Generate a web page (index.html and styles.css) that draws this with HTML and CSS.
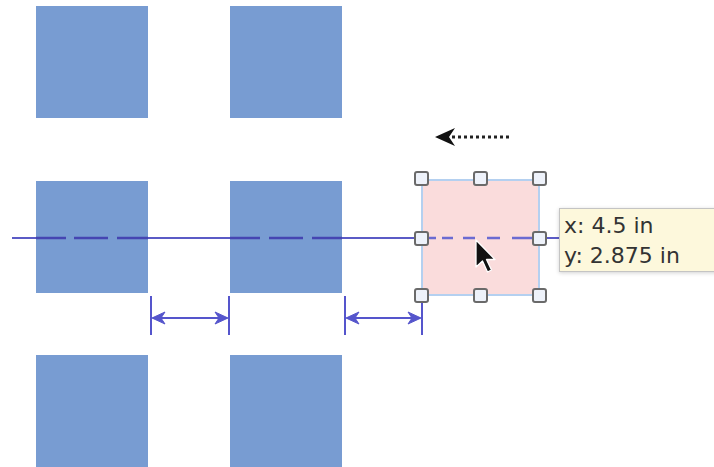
FILE: index.html
```html
<!DOCTYPE html>
<html lang="en">
<head>
    <meta charset="UTF-8">
    <title>Align shapes</title>
    <link rel="stylesheet" href="styles.css">
</head>
<body>
<div class="canvas">
    <div class="shape" style="left: 36px; top: 6px;"></div>
    <div class="shape" style="left: 230px; top: 6px;"></div>
    <div class="shape" style="left: 36px; top: 181px;"></div>
    <div class="shape" style="left: 230px; top: 181px;"></div>
    <div class="shape" style="left: 36px; top: 355px;"></div>
    <div class="shape" style="left: 230px; top: 355px;"></div>

    <div class="shape selected" style="left: 421px; top: 179px;"></div>

    <svg class="guides" width="714" height="467" viewBox="0 0 714 467">
        <!-- centre guide -->
        <g stroke="#5b5bc6" stroke-width="2">
            <line x1="12" y1="238" x2="36" y2="238"/>
            <line x1="148" y1="238" x2="230" y2="238"/>
            <line x1="342" y1="238" x2="421" y2="238"/>
            <line x1="539" y1="238" x2="560" y2="238"/>
        </g>
        <g stroke="#4545b2" stroke-width="2.5">
            <line x1="36" y1="238" x2="66" y2="238"/>
            <line x1="74" y1="238" x2="108" y2="238"/>
            <line x1="117" y1="238" x2="148" y2="238"/>
            <line x1="230" y1="238" x2="260" y2="238"/>
            <line x1="269" y1="238" x2="303" y2="238"/>
            <line x1="312" y1="238" x2="342" y2="238"/>
        </g>
        <g stroke="#6b6bd2" stroke-width="2.5">
            <line x1="421" y1="238" x2="436" y2="238"/>
            <line x1="442" y1="238" x2="453" y2="238"/>
            <line x1="463" y1="238" x2="475" y2="238"/>
            <line x1="487" y1="238" x2="500" y2="238"/>
            <line x1="512" y1="238" x2="539" y2="238"/>
        </g>

        <!-- spacing markers -->
        <g stroke="#5555cc" stroke-width="2" fill="#5555cc">
            <line x1="151" y1="296" x2="151" y2="335"/>
            <line x1="229" y1="296" x2="229" y2="335"/>
            <line x1="153" y1="318" x2="227" y2="318"/>
            <path d="M152 318 L165 312 L161 318 L165 324 Z" stroke-width="1"/>
            <path d="M228 318 L215 312 L219 318 L215 324 Z" stroke-width="1"/>

            <line x1="345" y1="296" x2="345" y2="335"/>
            <line x1="422" y1="302" x2="422" y2="335"/>
            <line x1="347" y1="318" x2="420" y2="318"/>
            <path d="M346 318 L359 312 L355 318 L359 324 Z" stroke-width="1"/>
            <path d="M421 318 L408 312 L412 318 L408 324 Z" stroke-width="1"/>
        </g>

        <!-- drag direction -->
        <line x1="452" y1="137" x2="511" y2="137" stroke="#222" stroke-width="3" stroke-dasharray="3 3"/>
        <path d="M435 137 L455 128 L449 137 L455 146 Z" fill="#111"/>

        <!-- cursor -->
        <path d="M476 240 L476 267 L482.5 261 L487.5 272 L491.5 270 L486.5 259.5 L495 259.5 Z"
              fill="#111" stroke="#fff" stroke-width="1.3" stroke-linejoin="round"/>
    </svg>

    <span class="handle" style="left: 414px; top: 171px;"></span>
    <span class="handle" style="left: 473px; top: 171px;"></span>
    <span class="handle" style="left: 532px; top: 171px;"></span>
    <span class="handle" style="left: 414px; top: 231px;"></span>
    <span class="handle" style="left: 532px; top: 231px;"></span>
    <span class="handle" style="left: 414px; top: 288px;"></span>
    <span class="handle" style="left: 473px; top: 288px;"></span>
    <span class="handle" style="left: 532px; top: 288px;"></span>

    <div class="tooltip">
        <div>x: 4.5 in</div>
        <div>y: 2.875 in</div>
    </div>
</div>
</body>
</html>
```

FILE: styles.css
```css
body {
    margin: 0;
    background: #fff;
    overflow: hidden;
}

.canvas {
    position: relative;
    width: 714px;
    height: 467px;
    overflow: hidden;
    background: #fff;
}

.shape {
    position: absolute;
    width: 112px;
    height: 112px;
    background: #789cd2;
}

.shape.selected {
    box-sizing: border-box;
    width: 119px;
    height: 117px;
    background: #fadcdc;
    border: 2px solid #b4d0f0;
}

.guides {
    position: absolute;
    left: 0;
    top: 0;
}

.handle {
    position: absolute;
    width: 15px;
    height: 15px;
    box-sizing: border-box;
    border: 2px solid #6a6a6a;
    border-radius: 3px;
    background: #eef2fa;
}

.tooltip {
    position: absolute;
    left: 559px;
    top: 208px;
    width: 190px;
    height: 64px;
    box-sizing: border-box;
    padding: 2px 0 0 4px;
    background: #fdf8dc;
    border: 1px solid #c4c4c4;
    box-shadow: 0 1px 4px rgba(0, 0, 0, 0.18);
    font-family: "DejaVu Sans", sans-serif;
    font-size: 22px;
    line-height: 30px;
    color: #333;
}
```
